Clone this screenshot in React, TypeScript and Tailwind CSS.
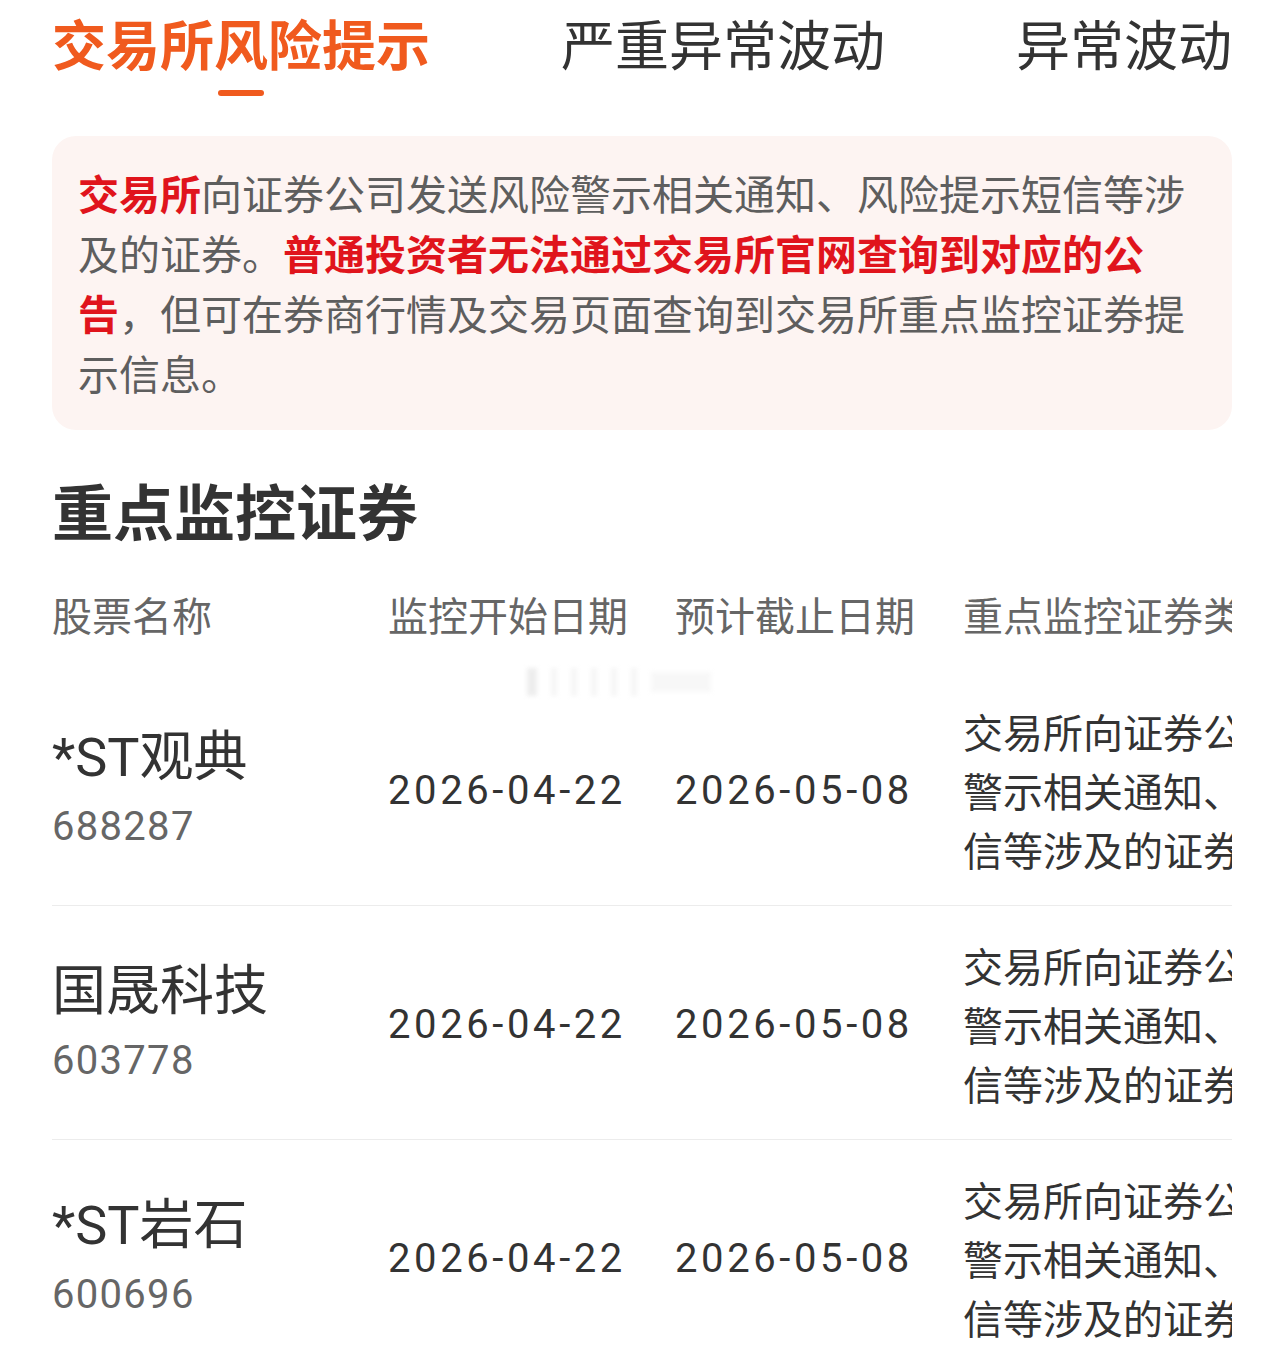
import React from "react";

const cjk = { fontFamily: "'Noto Sans CJK SC', sans-serif" };
const mix = { fontFamily: "Roboto, 'Noto Sans CJK SC', sans-serif" };

const rows = [
  { name: "*ST观典", code: "688287" },
  { name: "国晟科技", code: "603778" },
  { name: "*ST岩石", code: "600696" },
];

function Row({ name, code }: { name: string; code: string }) {
  return (
    <div className="flex h-[234px] items-center border-b border-[#ececec] pt-[4px] whitespace-nowrap">
      <div className="flex w-[336px] shrink-0 flex-col">
        <div className="text-[54px] leading-[72px] text-[#333]" style={mix}>
          {name}
        </div>
        <div className="text-[40px] leading-[66px] text-[#666] tracking-[1.3px]" style={mix}>
          {code}
        </div>
      </div>
      <div className="w-[287px] shrink-0 text-[40px] leading-[60px] text-[#333] tracking-[3.6px]" style={mix}>
        2026-04-22
      </div>
      <div className="w-[288px] shrink-0 text-[40px] leading-[60px] text-[#333] tracking-[3.6px]" style={mix}>
        2026-05-08
      </div>
      <div className="w-[500px] shrink-0 whitespace-normal text-[40px] leading-[59px] text-[#333]" style={cjk}>
        交易所向证券公司发送风险警示相关通知、风险提示短信等涉及的证券
      </div>
    </div>
  );
}

export default function App() {
  return (
    <div className="w-[1284px] min-h-[1362px] bg-white" style={cjk}>
      <div className="px-[52px]">
        {/* Tabs */}
        <div className="flex justify-between pt-[8px] whitespace-nowrap">
          <div className="flex flex-col items-center">
            <div className="text-[54px] leading-[70px] font-bold text-[#f05a1e]">交易所风险提示</div>
            <div className="mt-[12px] h-[6px] w-[46px] rounded-full bg-[#f05a1e]" />
          </div>
          <div className="text-[54px] leading-[70px] text-[#333]">严重异常波动</div>
          <div className="text-[54px] leading-[70px] text-[#333]">异常波动</div>
        </div>

        {/* Notice */}
        <div className="mt-[40px] rounded-[24px] bg-[#fdf4f2] px-[26px] pt-[26px] pb-[28px] text-[41px] leading-[60px] text-[#5e5e5e]">
          <span className="font-bold text-[#e0141c]">交易所</span>
          向证券公司发送风险警示相关通知、风险提示短信等涉及的证券。
          <span className="font-bold text-[#e0141c]">普通投资者无法通过交易所官网查询到对应的公告</span>
          ，但可在券商行情及交易页面查询到交易所重点监控证券提示信息。
        </div>

        {/* Title */}
        <div className="mt-[40px] text-[61px] leading-[80px] font-bold text-[#333]">重点监控证券</div>

        {/* Table */}
        <div className="overflow-hidden">
          <div className="mt-[34px] flex h-[60px] items-center whitespace-nowrap text-[40px] leading-[60px] text-[#666]">
            <div className="w-[336px] shrink-0">股票名称</div>
            <div className="w-[287px] shrink-0">监控开始日期</div>
            <div className="w-[288px] shrink-0">预计截止日期</div>
            <div className="w-[500px] shrink-0">重点监控证券类型</div>
          </div>
          <div className="flex h-[28px] items-end">
            <div className="relative ml-[475px] flex h-[28px] w-[245px] translate-y-[24px] items-center gap-[14px] opacity-50 blur-[2px]">
              <div className="h-full w-[10px] bg-[#dcdcdc]" />
              <div className="h-full w-[6px] bg-[#ececec]" />
              <div className="h-full w-[6px] bg-[#ececec]" />
              <div className="h-full w-[6px] bg-[#ececec]" />
              <div className="h-full w-[6px] bg-[#ececec]" />
              <div className="h-full w-[6px] bg-[#ececec]" />
              <div className="h-[20px] w-[60px] bg-[#f0f0f0]" />
            </div>
          </div>
          {rows.map((r) => (
            <Row key={r.code} name={r.name} code={r.code} />
          ))}
        </div>
      </div>
    </div>
  );
}
